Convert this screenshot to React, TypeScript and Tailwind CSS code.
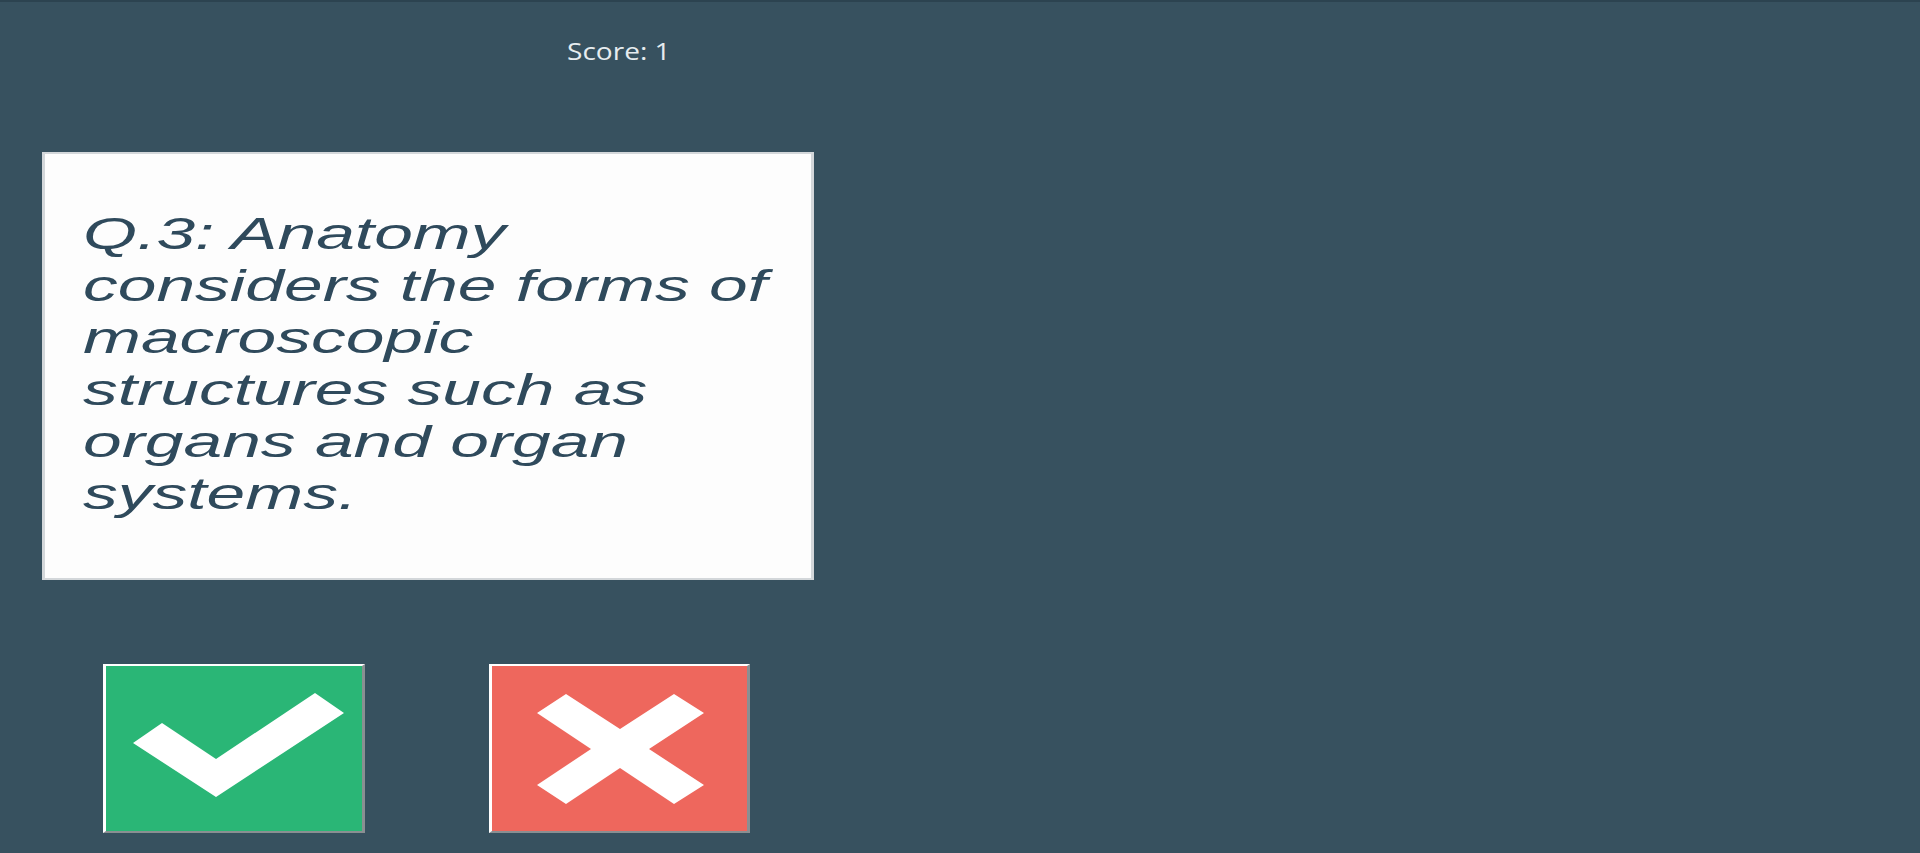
import React from "react";

const lines = [
  "Q.3: Anatomy",
  "considers the forms of",
  "macroscopic",
  "structures such as",
  "organs and organ",
  "systems.",
];

function CheckIcon() {
  return (
    <svg viewBox="0 0 256 165" preserveAspectRatio="none" className="h-full w-full">
      <polygon fill="#ffffff" points="27,77 56,57 110,93 209,27 238,47 110,131" />
    </svg>
  );
}

function CrossIcon() {
  return (
    <svg viewBox="0 0 255 165" preserveAspectRatio="none" className="h-full w-full">
      <polygon
        fill="#ffffff"
        points="74,28 128,63 182,28 212,47 157,83 212,119 182,138 128,102 74,138 45,119 99,83 45,47"
      />
    </svg>
  );
}

export default function App() {
  return (
    <div className="flex flex-col min-h-screen h-[853px] bg-[#37515f] border-t-2 border-[#2c4350] overflow-hidden">
      <header className="pl-[567px] pt-[34px] h-[150px]">
        <span
          className="inline-block origin-left scale-x-[1.22] text-[23px] leading-[30px] text-[#e6ecef]"
          style={{ fontFamily: '"Open Sans", "Noto Sans", sans-serif' }}
        >
          Score: 1
        </span>
      </header>

      <main className="ml-[42px] w-[772px] h-[428px] bg-[#fdfdfd] border-y-2 border-x-[3px] border-[#d3d7da] pl-[38px] pt-[54px]">
        <p
          className="origin-left scale-x-[1.545] italic text-[45px] leading-[52px] text-[#2f4a5c] whitespace-nowrap"
          style={{ fontFamily: '"Liberation Sans", Arial, sans-serif' }}
        >
          {lines.map((l) => (
            <span key={l} className="block">
              {l}
            </span>
          ))}
        </p>
      </main>

      <div className="flex gap-[124px] ml-[103px] mt-[84px]">
        <button className="w-[262px] h-[169px] bg-[#2ab676] border-t-2 border-l-[3px] border-b-2 border-r-[3px] border-t-white border-l-white border-b-[#8a8f92] border-r-[#8a8f92]">
          <CheckIcon />
        </button>
        <button className="w-[261px] h-[169px] bg-[#ee675d] border-t-2 border-l-[3px] border-b-2 border-r-[3px] border-t-white border-l-white border-b-[#8a8f92] border-r-[#8a8f92]">
          <CrossIcon />
        </button>
      </div>
    </div>
  );
}
